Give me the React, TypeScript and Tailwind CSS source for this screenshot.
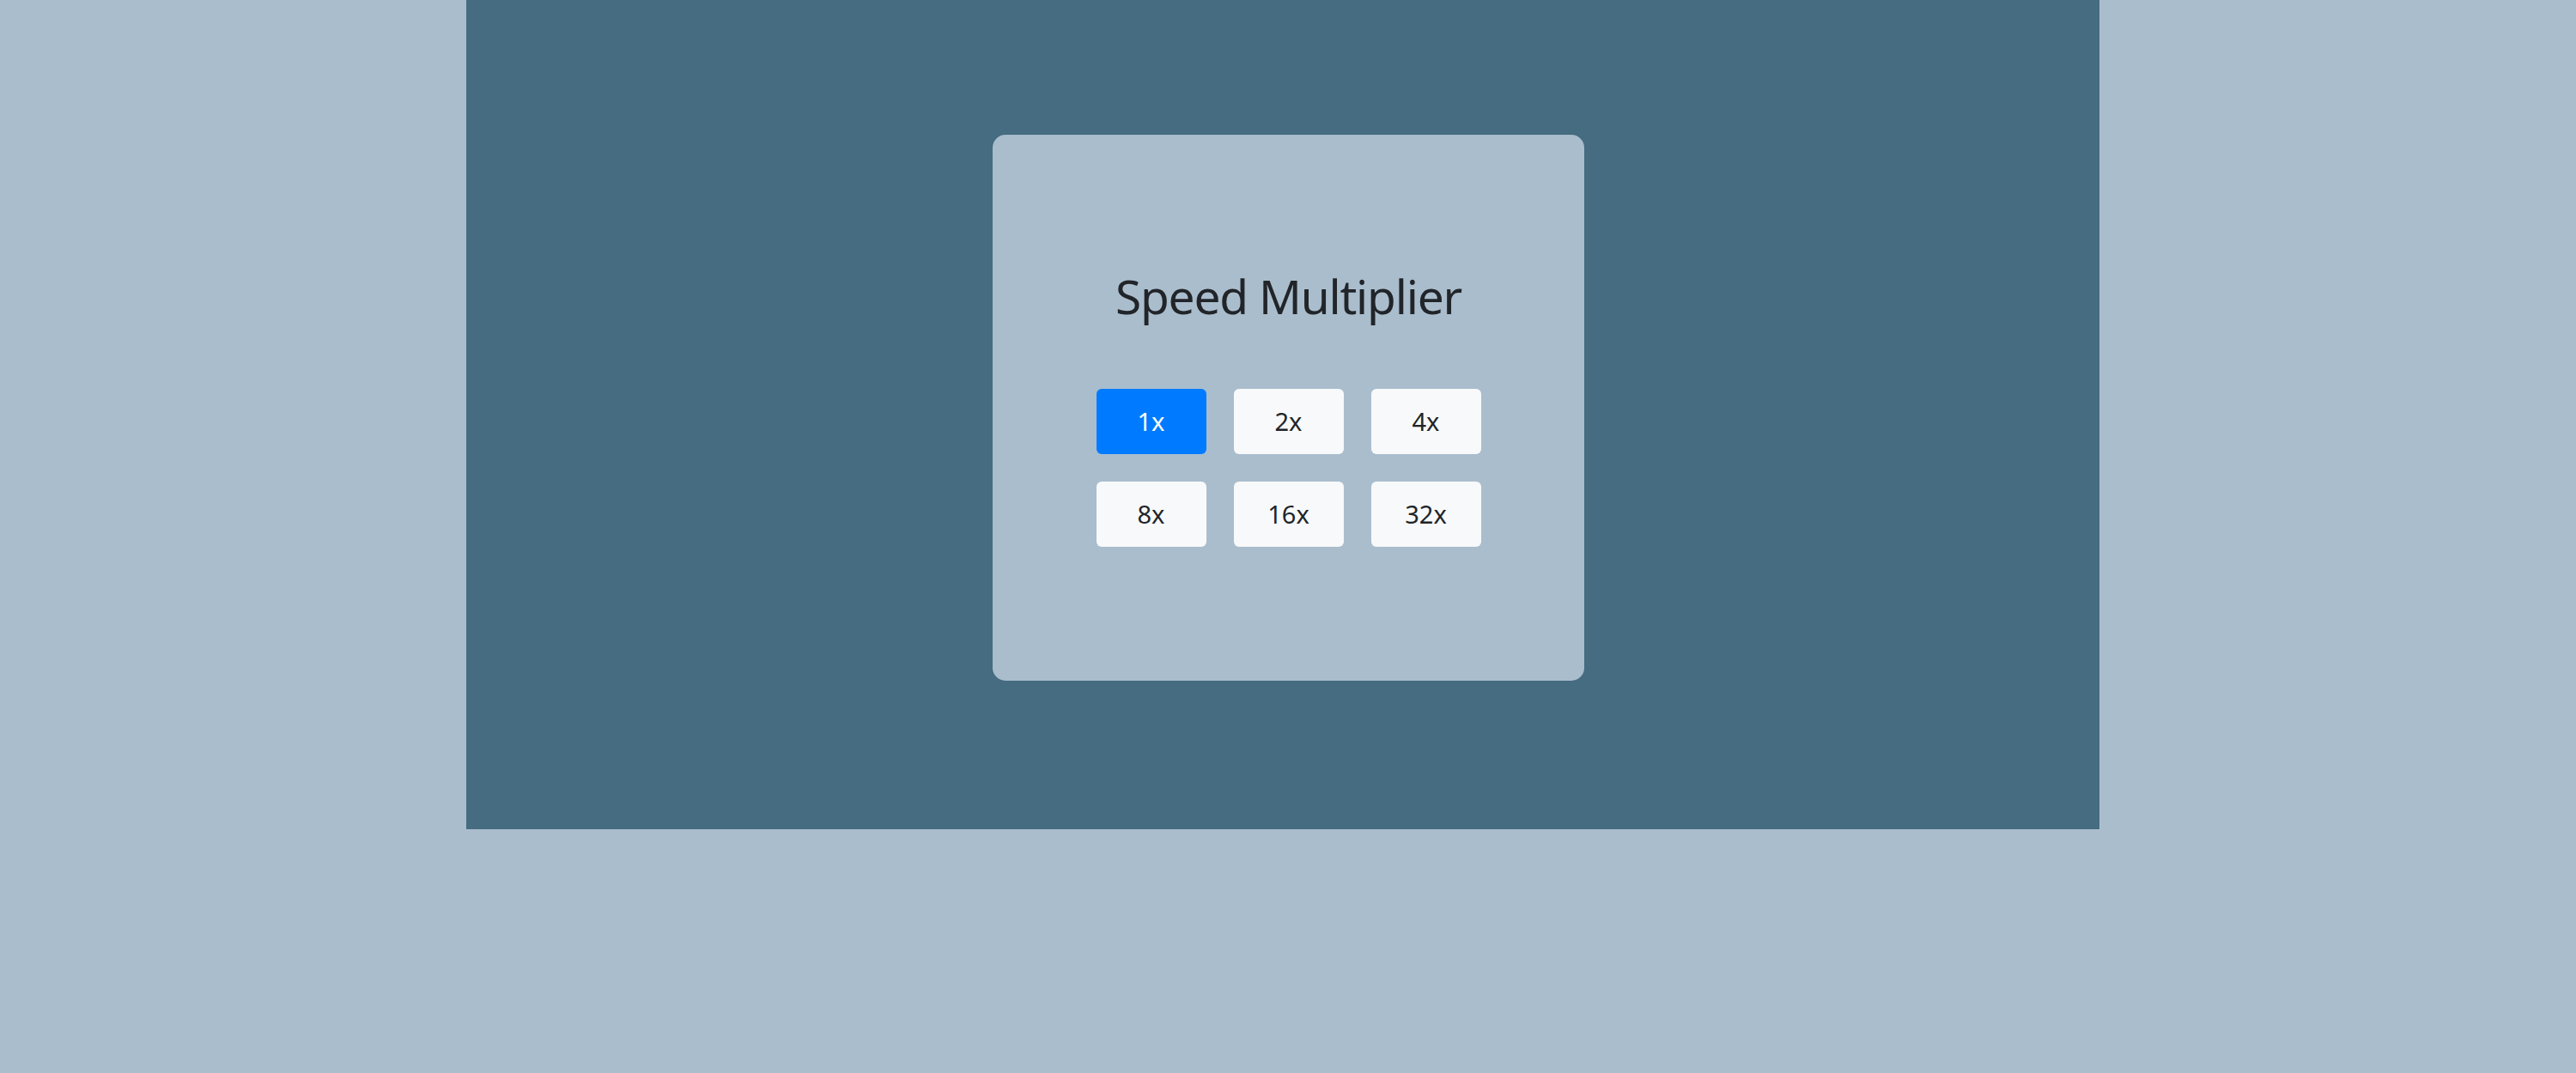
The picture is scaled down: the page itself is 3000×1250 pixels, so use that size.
const speeds = ["1x", "2x", "4x", "8x", "16x", "32x"];

export default function App() {
  const active = "1x";

  return (
    <div
      className="min-h-[1250px] w-full bg-[#aabdcd]"
      style={{ fontFamily: '"Noto Sans", "Open Sans", sans-serif' }}
    >
      <div className="ml-[543px] h-[966px] w-[1902px] bg-[#456c80] pt-[157px]">
        <div className="ml-[613px] flex h-[636px] w-[689px] flex-col items-center rounded-[15px] bg-[#aabdcd]">
          <h1 className="mt-[155px] text-[55px] leading-[1.2] font-normal tracking-[-1.2px] text-[#212529]">
            Speed Multiplier
          </h1>

          <div className="mt-[75px] grid grid-cols-[128px_128px_128px] gap-[32px]">
            {speeds.map((s) => (
              <button
                key={s}
                className={
                  s === active
                    ? "h-[76px] rounded-[6px] bg-[#007bff] text-[29px] text-white"
                    : "h-[76px] rounded-[6px] bg-[#f8f9fa] text-[29px] text-[#212529]"
                }
              >
                {s}
              </button>
            ))}
          </div>
        </div>
      </div>
    </div>
  );
}
